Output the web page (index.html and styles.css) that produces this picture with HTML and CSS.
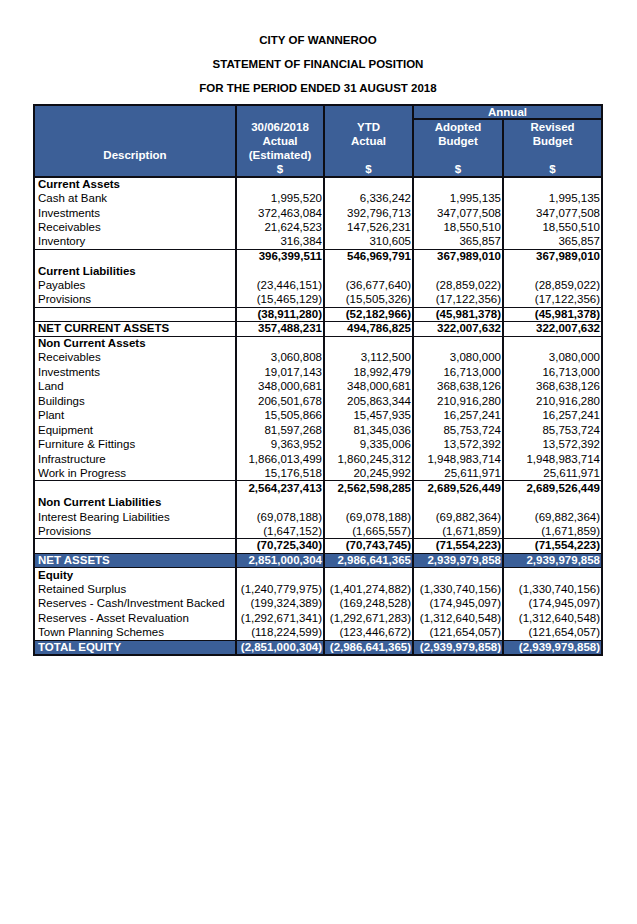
FILE: index.html
```html
<!DOCTYPE html>
<html>
<head>
<meta charset="utf-8">
<link rel="stylesheet" href="styles.css">
</head>
<body>
<div class="page">
  <div class="titles">
    <p>CITY OF WANNEROO</p>
    <p>STATEMENT OF FINANCIAL POSITION</p>
    <p>FOR THE PERIOD ENDED 31 AUGUST 2018</p>
  </div>
  <table class="fs">
    <colgroup>
      <col class="c-desc"><col class="c-a"><col class="c-b"><col class="c-c"><col class="c-d">
    </colgroup>
    <thead>
      <tr class="h1">
        <th rowspan="2" class="desc">Description</th>
        <th rowspan="2">30/06/2018<br>Actual<br>(Estimated)<br>$</th>
        <th rowspan="2">YTD<br>Actual<br><br>$</th>
        <th colspan="2" class="annual">Annual</th>
      </tr>
      <tr class="h2">
        <th>Adopted<br>Budget<br><br>$</th>
        <th>Revised<br>Budget<br><br>$</th>
      </tr>
    </thead>
    <tbody>
      <tr class="sec"><td>Current Assets</td><td></td><td></td><td></td><td></td></tr>
      <tr><td>Cash at Bank</td><td>1,995,520</td><td>6,336,242</td><td>1,995,135</td><td>1,995,135</td></tr>
      <tr><td>Investments</td><td>372,463,084</td><td>392,796,713</td><td>347,077,508</td><td>347,077,508</td></tr>
      <tr><td>Receivables</td><td>21,624,523</td><td>147,526,231</td><td>18,550,510</td><td>18,550,510</td></tr>
      <tr><td>Inventory</td><td>316,384</td><td>310,605</td><td>365,857</td><td>365,857</td></tr>
      <tr class="sub top"><td></td><td>396,399,511</td><td>546,969,791</td><td>367,989,010</td><td>367,989,010</td></tr>
      <tr class="sec"><td>Current Liabilities</td><td></td><td></td><td></td><td></td></tr>
      <tr><td>Payables</td><td>(23,446,151)</td><td>(36,677,640)</td><td>(28,859,022)</td><td>(28,859,022)</td></tr>
      <tr><td>Provisions</td><td>(15,465,129)</td><td>(15,505,326)</td><td>(17,122,356)</td><td>(17,122,356)</td></tr>
      <tr class="sub top bot"><td></td><td>(38,911,280)</td><td>(52,182,966)</td><td>(45,981,378)</td><td>(45,981,378)</td></tr>
      <tr class="sub bot"><td>NET CURRENT ASSETS</td><td>357,488,231</td><td>494,786,825</td><td>322,007,632</td><td>322,007,632</td></tr>
      <tr class="sec"><td>Non Current Assets</td><td></td><td></td><td></td><td></td></tr>
      <tr><td>Receivables</td><td>3,060,808</td><td>3,112,500</td><td>3,080,000</td><td>3,080,000</td></tr>
      <tr><td>Investments</td><td>19,017,143</td><td>18,992,479</td><td>16,713,000</td><td>16,713,000</td></tr>
      <tr><td>Land</td><td>348,000,681</td><td>348,000,681</td><td>368,638,126</td><td>368,638,126</td></tr>
      <tr><td>Buildings</td><td>206,501,678</td><td>205,863,344</td><td>210,916,280</td><td>210,916,280</td></tr>
      <tr><td>Plant</td><td>15,505,866</td><td>15,457,935</td><td>16,257,241</td><td>16,257,241</td></tr>
      <tr><td>Equipment</td><td>81,597,268</td><td>81,345,036</td><td>85,753,724</td><td>85,753,724</td></tr>
      <tr><td>Furniture &amp; Fittings</td><td>9,363,952</td><td>9,335,006</td><td>13,572,392</td><td>13,572,392</td></tr>
      <tr><td>Infrastructure</td><td>1,866,013,499</td><td>1,860,245,312</td><td>1,948,983,714</td><td>1,948,983,714</td></tr>
      <tr><td>Work in Progress</td><td>15,176,518</td><td>20,245,992</td><td>25,611,971</td><td>25,611,971</td></tr>
      <tr class="sub top"><td></td><td>2,564,237,413</td><td>2,562,598,285</td><td>2,689,526,449</td><td>2,689,526,449</td></tr>
      <tr class="sec"><td>Non Current Liabilities</td><td></td><td></td><td></td><td></td></tr>
      <tr><td>Interest Bearing Liabilities</td><td>(69,078,188)</td><td>(69,078,188)</td><td>(69,882,364)</td><td>(69,882,364)</td></tr>
      <tr><td>Provisions</td><td>(1,647,152)</td><td>(1,665,557)</td><td>(1,671,859)</td><td>(1,671,859)</td></tr>
      <tr class="sub top bot"><td></td><td>(70,725,340)</td><td>(70,743,745)</td><td>(71,554,223)</td><td>(71,554,223)</td></tr>
      <tr class="total"><td>NET ASSETS</td><td>2,851,000,304</td><td>2,986,641,365</td><td>2,939,979,858</td><td>2,939,979,858</td></tr>
      <tr class="sec"><td>Equity</td><td></td><td></td><td></td><td></td></tr>
      <tr><td>Retained Surplus</td><td>(1,240,779,975)</td><td>(1,401,274,882)</td><td>(1,330,740,156)</td><td>(1,330,740,156)</td></tr>
      <tr><td>Reserves - Cash/Investment Backed</td><td>(199,324,389)</td><td>(169,248,528)</td><td>(174,945,097)</td><td>(174,945,097)</td></tr>
      <tr><td>Reserves - Asset Revaluation</td><td>(1,292,671,341)</td><td>(1,292,671,283)</td><td>(1,312,640,548)</td><td>(1,312,640,548)</td></tr>
      <tr><td>Town Planning Schemes</td><td>(118,224,599)</td><td>(123,446,672)</td><td>(121,654,057)</td><td>(121,654,057)</td></tr>
      <tr class="total"><td>TOTAL EQUITY</td><td>(2,851,000,304)</td><td>(2,986,641,365)</td><td>(2,939,979,858)</td><td>(2,939,979,858)</td></tr>
    </tbody>
  </table>
</div>
</body>
</html>
```
FILE: styles.css
```css
* { box-sizing: border-box; }
html, body { margin: 0; padding: 0; background: #fff; }
body {
  font-family: "Liberation Sans", Arial, sans-serif;
  font-size: 11.5px;
  color: #000;
}
.page {
  width: 637px;
  height: 924px;
  padding: 28px 0 0 33px;
}
.titles {
  width: 570px;
  text-align: center;
  font-weight: bold;
  margin-bottom: 4px;
}
.titles p {
  margin: 0;
  line-height: 24px;
}
.fs {
  width: 570px;
  border-collapse: collapse;
  table-layout: fixed;
  border: 2px solid #0d0d14;
}
.c-desc { width: 202px; }
.c-a { width: 88px; }
.c-b { width: 89px; }
.c-c { width: 90px; }
.c-d { width: 99px; }
.fs th, .fs td {
  border-left: 2px solid #0d0d14;
  border-right: 2px solid #0d0d14;
  padding: 0;
}
.fs thead th {
  background: #3c5f97;
  color: #fff;
  font-weight: bold;
  line-height: 14px;
  text-align: center;
  vertical-align: bottom;
}
.fs thead tr.h1 th.annual {
  height: 13px;
  line-height: 12px;
  border-bottom: 2px solid #0d0d14;
  vertical-align: middle;
}
.fs thead th.desc {
  padding-bottom: 14px;
}
.fs thead tr.h2 th {
  border-bottom: 2px solid #0d0d14;
}
.fs thead tr.h1 th[rowspan] {
  border-bottom: 2px solid #0d0d14;
}
.fs tbody tr { height: 14.47px; }
.fs tbody td {
  line-height: 13px;
  height: 14.47px;
  text-align: right;
  padding-right: 1px;
  white-space: nowrap;
  vertical-align: middle;
}
.fs tbody td:first-child {
  text-align: left;
  padding-left: 3px;
  padding-right: 0;
}
.fs tr.sec td, .fs tr.sub td, .fs tr.total td { font-weight: bold; }
.fs tr.top td { border-top: 1px solid #0d0d14; }
.fs tr.bot td { border-bottom: 1px solid #0d0d14; }
.fs tr.total td {
  background: #3b5f98;
  color: #fff;
  border-top: 1px solid #0d0d14;
  border-bottom: 1px solid #0d0d14;
}
```
